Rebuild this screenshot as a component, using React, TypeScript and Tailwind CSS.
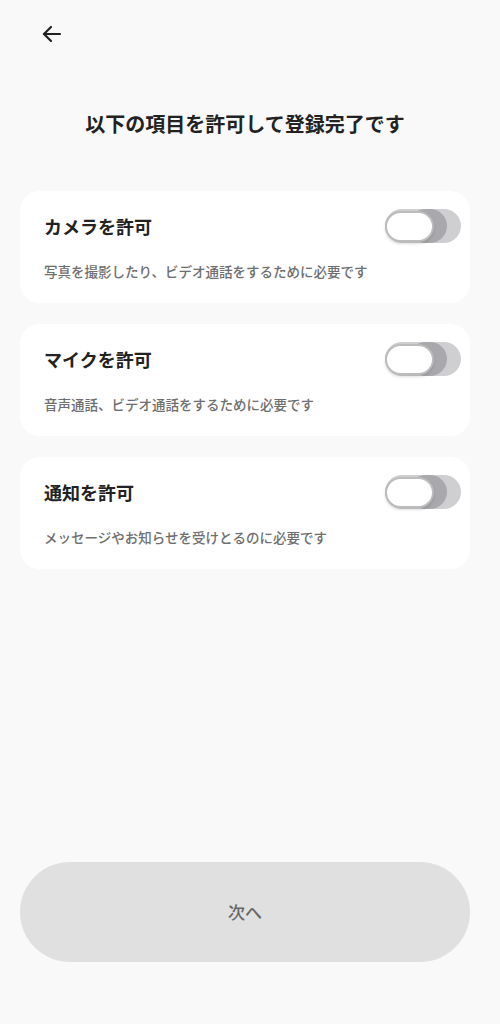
import React, { useState } from 'react';

const items = [
  { title: 'カメラを許可', desc: '写真を撮影したり、ビデオ通話をするために必要です' },
  { title: 'マイクを許可', desc: '音声通話、ビデオ通話をするために必要です' },
  { title: '通知を許可', desc: 'メッセージやお知らせを受けとるのに必要です' },
];

function Toggle({ on, onClick }: { on: boolean; onClick: () => void }) {
  return (
    <button onClick={onClick} className="relative w-[76px] h-[34px] shrink-0">
      <span className="absolute inset-0 rounded-full bg-[#cfcfd2]" />
      <span className="absolute left-[24px] top-0 w-[38px] h-[34px] rounded-full bg-[#a9a9ad]" />
      <span className="absolute left-0 top-[2px] w-[49px] h-[31px] rounded-full bg-white border-2 border-[#bcbcbc] shadow-[0_2px_3px_rgba(0,0,0,0.12)]" />
    </button>
  );
}

export default function App() {
  const [enabled, setEnabled] = useState([false, false, false]);

  return (
    <div
      className="w-[500px] h-[1024px] bg-[#f9f9f9] flex flex-col pl-5 pr-[30px]"
      style={{ fontFamily: '"Noto Sans CJK JP", "Noto Sans", sans-serif' }}
    >
      {/* Header */}
      <div className="h-[68px] flex items-center pl-[20px]">
        <svg width="24" height="24" viewBox="0 0 24 24" fill="none" stroke="#222" strokeWidth="2.2" strokeLinecap="round" strokeLinejoin="round">
          <path d="M20 12H4" />
          <path d="M11 5l-7 7 7 7" />
        </svg>
      </div>

      <h1 className="mt-[38px] text-center text-[20px] font-bold text-[#222] leading-[36px]">
        以下の項目を許可して登録完了です
      </h1>

      {/* Permission cards */}
      <div className="mt-[49px] flex flex-col gap-[21px]">
        {items.map((item, i) => (
          <div key={item.title} className="bg-white rounded-[20px] h-[112px] pl-6 pr-[9px] pt-[18px]">
            <div className="flex items-center justify-between">
              <span className="text-[18px] font-bold text-[#222]">{item.title}</span>
              <Toggle
                on={enabled[i]}
                onClick={() => setEnabled(enabled.map((v, j) => (j === i ? !v : v)))}
              />
            </div>
            <p className="mt-[18px] text-[13.5px] font-medium text-[#6e6e6e]">{item.desc}</p>
          </div>
        ))}
      </div>

      <div className="flex-1" />

      {/* Next button */}
      <button className="mb-[62px] h-[100px] w-full rounded-full bg-[#e0e0e0] text-[17px] font-medium text-[#666]">
        次へ
      </button>
    </div>
  );
}
